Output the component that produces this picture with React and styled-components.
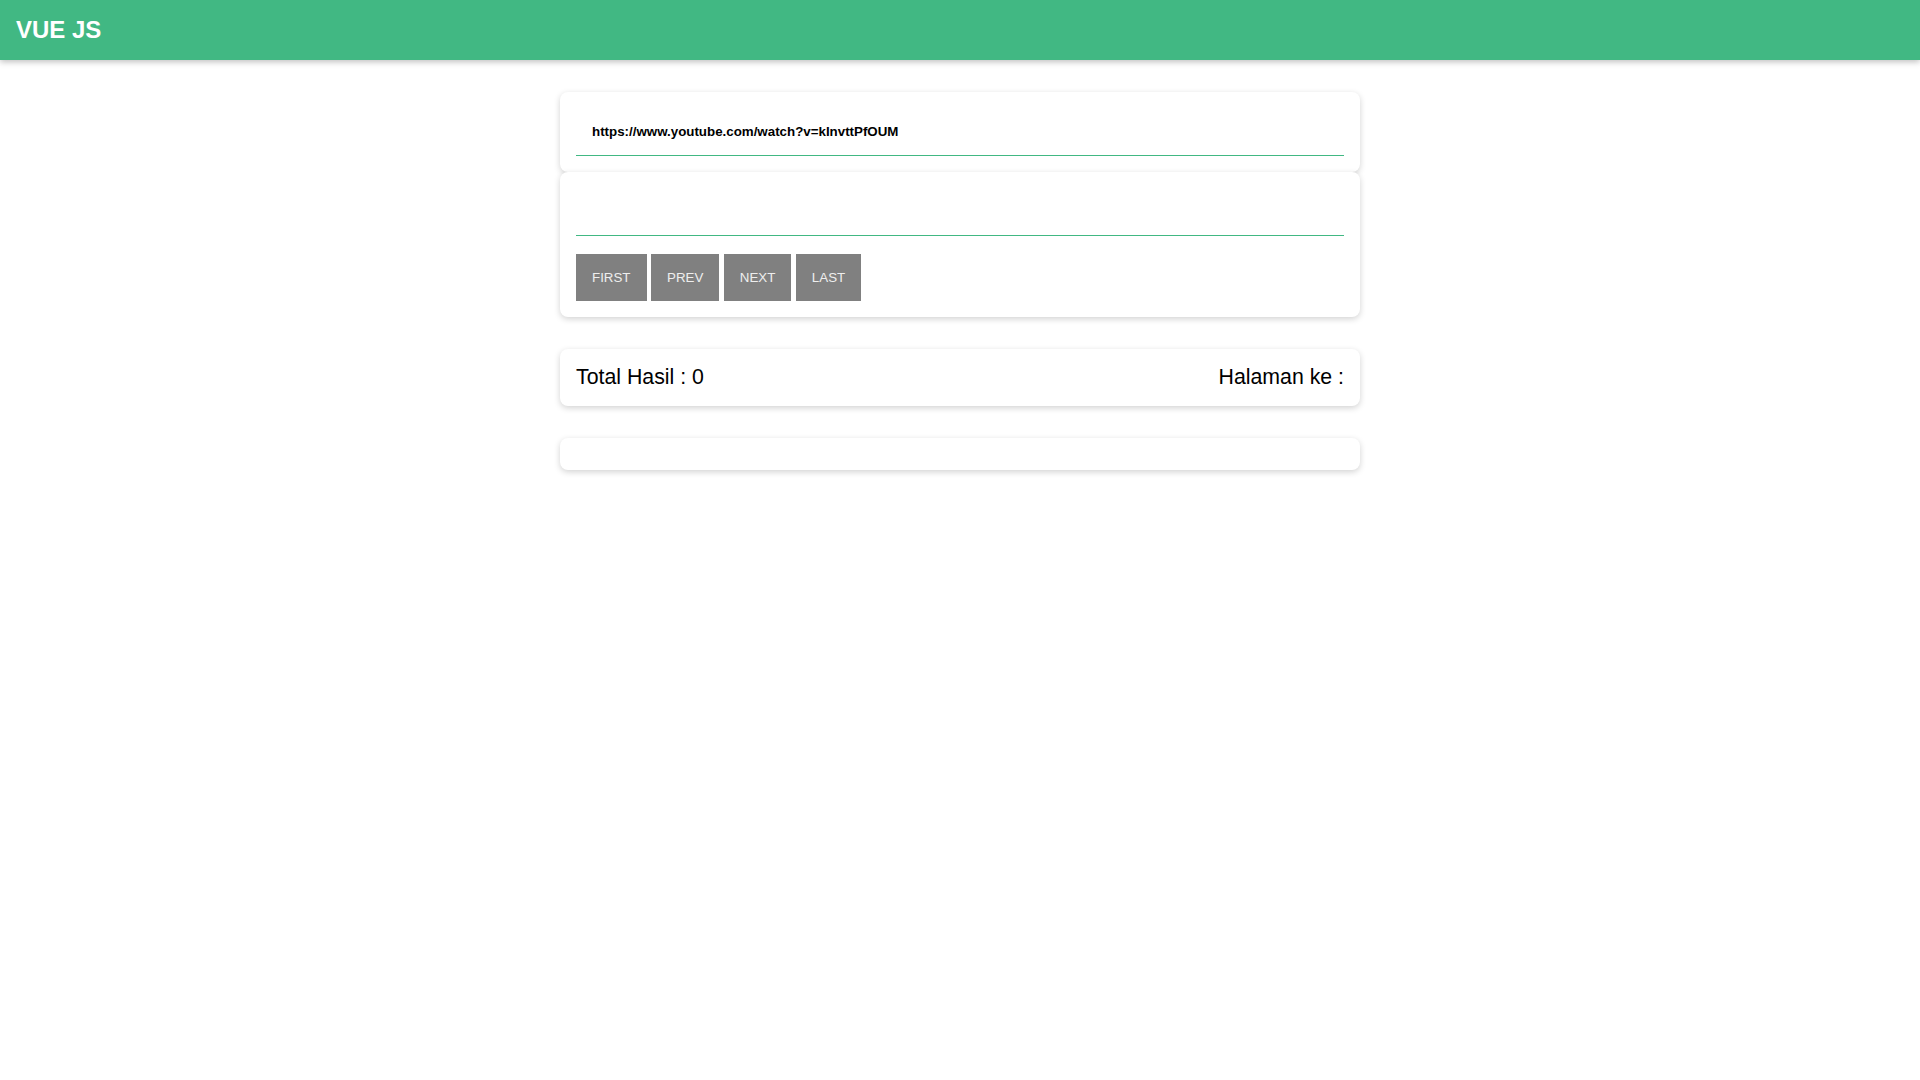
import React from "react";
import styled, { createGlobalStyle } from "styled-components";

const GlobalStyle = createGlobalStyle`
  * {
    box-sizing: border-box;
  }
  body {
    margin: 0;
    background: #fff;
    font-family: "Liberation Sans", Arial, sans-serif;
    color: #000;
  }
`;

const Header = styled.header`
  height: 60px;
  background-color: #41b883;
  box-shadow: 0 2px 6px rgba(0, 0, 0, 0.25);
  display: flex;
  align-items: center;
  padding: 0 16px;
`;

const Brand = styled.h1`
  margin: 0;
  font-size: 24px;
  font-weight: bold;
  color: #fff;
`;

const Main = styled.main`
  width: 800px;
  margin: 32px auto 0;
`;

const Card = styled.div`
  background: #fff;
  border-radius: 8px;
  padding: 16px;
  box-shadow: 0 2px 6px rgba(0, 0, 0, 0.18);
  margin-bottom: ${(props) => (props.$stacked ? "0" : "32px")};
  min-height: 32px;
`;

const Input = styled.input`
  display: block;
  width: 100%;
  height: 48px;
  border: none;
  border-bottom: 1px solid #41b883;
  outline: none;
  padding: 0 16px;
  font-family: "Liberation Sans", Arial, sans-serif;
  font-size: 13.333px;
  font-weight: bold;
  color: #000;
  background: transparent;
  margin-bottom: ${(props) => (props.$spaced ? "18px" : "0")};
`;

const ButtonRow = styled.div`
  display: flex;
  gap: 4.5px;
`;

const PageButton = styled.button`
  background-color: #808080;
  color: #eee;
  border: none;
  font-family: "Liberation Sans", Arial, sans-serif;
  font-size: 13.333px;
  line-height: 15px;
  padding: 16px;
  cursor: pointer;
`;

const InfoRow = styled.div`
  display: flex;
  justify-content: space-between;
  font-size: 21.3px;
  line-height: 25px;
`;

const App = () => {
  return (
    <>
      <GlobalStyle />
      <Header>
        <Brand>VUE JS</Brand>
      </Header>
      <Main>
        <Card $stacked>
          <Input defaultValue="https://www.youtube.com/watch?v=kInvttPfOUM" />
        </Card>
        <Card>
          <Input $spaced />
          <ButtonRow>
            <PageButton>FIRST</PageButton>
            <PageButton>PREV</PageButton>
            <PageButton>NEXT</PageButton>
            <PageButton>LAST</PageButton>
          </ButtonRow>
        </Card>
        <Card>
          <InfoRow>
            <span>Total Hasil : 0</span>
            <span>Halaman ke :</span>
          </InfoRow>
        </Card>
        <Card />
      </Main>
    </>
  );
};

export default App;
